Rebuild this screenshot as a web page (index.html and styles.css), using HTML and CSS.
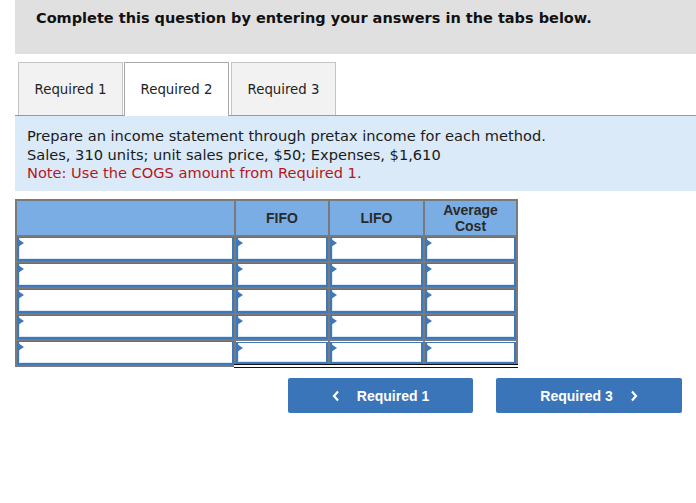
FILE: index.html
```html
<!DOCTYPE html>
<html>
<head>
<meta charset="utf-8">
<link rel="stylesheet" href="styles.css">
</head>
<body>
<div class="page">
  <div class="banner">Complete this question by entering your answers in the tabs below.</div>
  <div class="tabs">
    <div class="tab">Required 1</div>
    <div class="tab active">Required 2</div>
    <div class="tab">Required 3</div>
  </div>
  <div class="panel">
    <div>Prepare an income statement through pretax income for each method.</div>
    <div>Sales, 310 units; unit sales price, $50; Expenses, $1,610</div>
    <div class="note">Note: Use the COGS amount from Required 1.</div>
  </div>
  <table class="grid">
    <colgroup>
      <col class="c1"><col class="c2"><col class="c3"><col class="c4">
    </colgroup>
    <thead>
      <tr>
        <th></th>
        <th>FIFO</th>
        <th>LIFO</th>
        <th>Average<br>Cost</th>
      </tr>
    </thead>
    <tbody>
      <tr><td><div class="inp"></div></td><td><div class="inp"></div></td><td><div class="inp"></div></td><td><div class="inp"></div></td></tr>
      <tr><td><div class="inp"></div></td><td><div class="inp"></div></td><td><div class="inp"></div></td><td><div class="inp"></div></td></tr>
      <tr><td><div class="inp"></div></td><td><div class="inp"></div></td><td><div class="inp"></div></td><td><div class="inp"></div></td></tr>
      <tr><td><div class="inp"></div></td><td><div class="inp"></div></td><td><div class="inp"></div></td><td><div class="inp"></div></td></tr>
      <tr class="last"><td><div class="inp"></div></td><td class="total"><div class="inp"></div></td><td class="total"><div class="inp"></div></td><td class="total"><div class="inp"></div></td></tr>
    </tbody>
  </table>
  <div class="nav">
    <div class="btn">
      <svg class="chev" width="8" height="12" viewBox="0 0 8 12"><polyline points="6,1.5 2,6 6,10.5" fill="none" stroke="#fff" stroke-width="2.2"/></svg>
      <span>Required 1</span>
    </div>
    <div class="btn">
      <span>Required 3</span>
      <svg class="chev" width="8" height="12" viewBox="0 0 8 12"><polyline points="2,1.5 6,6 2,10.5" fill="none" stroke="#fff" stroke-width="2.2"/></svg>
    </div>
  </div>
</div>
</body>
</html>
```

FILE: styles.css
```css
* { box-sizing: border-box; }
html, body { margin: 0; padding: 0; background: #fff; }
body { font-family: "DejaVu Sans", Verdana, sans-serif; color: #1a1a1a; }

.page { padding-left: 15px; }

.banner {
  background: #e0e0e0;
  height: 54px;
  padding: 10px 0 0 21px;
  font-weight: bold;
  font-size: 14.5px;
  color: #111;
}

.tabs {
  display: flex;
  margin-top: 8px;
  padding-left: 3px;
  border-bottom: 1px solid #999;
  height: 54px;
}
.tab {
  width: 105px;
  height: 53px;
  margin-right: 1px;
  background: #f2f2f2;
  border: 1px solid #c4c4c4;
  border-bottom: none;
  padding-top: 18px;
  text-align: center;
  font-size: 13.3px;
  line-height: 18px;
  color: #222;
}
.tab.active {
  background: #fff;
  border-color: #a8a8a8;
  height: 54px;
  margin-bottom: -1px;
  margin-right: 2px;
}

.panel {
  background: #dbeaf8;
  height: 75px;
  padding: 11px 0 0 12px;
  font-size: 14.6px;
  line-height: 18.5px;
  color: #1a1a1a;
}
.panel .note { color: #b5161d; }

.grid {
  margin-top: 8px;
  border-collapse: collapse;
  table-layout: fixed;
  width: 501px;
  font-family: "Liberation Sans", Arial, sans-serif;
}
.grid .c1 { width: 219px; }
.grid .c2 { width: 94px; }
.grid .c3 { width: 95px; }
.grid .c4 { width: 93px; }
.grid th {
  background: #7aade3;
  border: 2px solid #7a7a7a;
  height: 36px;
  font-size: 14px;
  font-weight: bold;
  color: #2a2a2a;
  line-height: 16px;
  padding: 0;
}
.grid td {
  border: 2px solid #7a7a7a;
  padding: 0;
  height: 26px;
}
.grid td .inp {
  position: relative;
  height: 24px;
  background: #fff;
  border: 2px solid #3e78bc;
  border-top-width: 1px;
  box-shadow: inset 0 -1px 0 #dbe8f6, inset 1px 0 0 #dbe8f6;
}
.grid td .inp::before {
  content: "";
  position: absolute;
  left: -1px;
  top: 1px;
  border-left: 6px solid #3e78bc;
  border-top: 4px solid transparent;
  border-bottom: 4px solid transparent;
}
.grid tr.last td.total {
  border-bottom: 4px double #111;
}
.grid tr.last td.total .inp { height: 22px; }

.nav {
  display: flex;
  margin-top: 10px;
  padding-left: 273px;
  gap: 23px;
}
.btn {
  width: 185px;
  height: 35px;
  background: #3a75ba;
  border-radius: 2px;
  display: flex;
  align-items: center;
  justify-content: center;
  gap: 17px;
  color: #fff;
  font-family: "Liberation Sans", Arial, sans-serif;
  font-weight: bold;
  font-size: 14px;
}
.btn + .btn { width: 186px; }
.chev { display: block; }
```
